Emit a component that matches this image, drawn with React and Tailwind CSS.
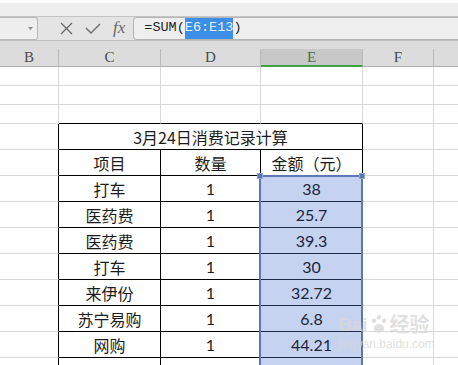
import React from 'react';

const cjk = { fontFamily: "'Noto Sans CJK SC', 'Noto Sans', sans-serif" };
const num = { fontFamily: "Lato, 'Noto Sans', sans-serif" };
const mono = { fontFamily: "'Liberation Mono', 'DejaVu Sans Mono', monospace" };
const serif = { fontFamily: "'Liberation Serif', 'DejaVu Serif', serif" };

const rows = [
  ['打车', '1', '38'],
  ['医药费', '1', '25.7'],
  ['医药费', '1', '39.3'],
  ['打车', '1', '30'],
  ['来伊份', '1', '32.72'],
  ['苏宁易购', '1', '6.8'],
  ['网购', '1', '44.21'],
  ['', '', ''],
];

// empty grid row above the table
const EmptyRow = ({ tableTop }) => (
  <div className="flex h-[19px] shrink-0">
    <div className="w-[59px] border-r border-b border-[#d9d9d9]" />
    <div className={`w-[102px] border-r border-b ${tableTop ? 'border-r-[#d9d9d9] border-b-black' : 'border-[#d9d9d9]'}`} />
    <div className={`w-[100px] border-r border-b ${tableTop ? 'border-r-[#d9d9d9] border-b-black' : 'border-[#d9d9d9]'}`} />
    <div className={`w-[102px] border-r border-b ${tableTop ? 'border-r-[#d9d9d9] border-b-black' : 'border-[#d9d9d9]'}`} />
    <div className="w-[71px] border-r border-b border-[#d9d9d9]" />
    <div className="flex-1 border-b border-[#d9d9d9]" />
  </div>
);

const TableRow = ({ a, b, c, selected, header }) => (
  <div className="flex h-[26px] shrink-0 text-[16px] text-[#1c1c1c]">
    <div className="w-[59px] border-r border-r-black border-b border-b-[#d9d9d9]" />
    <div className="w-[102px] border-r border-b border-black flex items-center justify-center" style={cjk}>{a}</div>
    <div className="w-[100px] border-r border-b border-black flex items-center justify-center" style={header ? cjk : num}>{b}</div>
    <div
      className={`w-[102px] border-r border-b flex items-center justify-center ${selected ? 'bg-[#c6d3f0] border-[#1d2a48] text-[#1b2540]' : 'border-black'}`}
      style={header ? cjk : num}
    >
      {c}
    </div>
    <div className="w-[71px] border-r border-b border-[#d9d9d9]" />
    <div className="flex-1 border-b border-[#d9d9d9]" />
  </div>
);

const HeaderCell = ({ label, w, active }) => (
  <div
    className={`${w} h-full flex items-center justify-center text-[15px] ${active ? 'bg-[#c8c8c8] text-[#4d6b4d] border-b-2 border-b-[#3fa146] border-r border-r-[#b9b9b9]' : 'text-[#4a4a4a] border-r border-[#b9b9b9] border-b border-b-[#b0b0b0]'}`}
    style={serif}
  >
    {label}
  </div>
);

export default function App() {
  return (
    <div className="relative w-[458px] h-[365px] overflow-hidden bg-white flex flex-col">
      {/* top strip */}
      <div className="h-[3px] shrink-0 bg-white" />
      <div className="h-[14px] shrink-0 bg-[#eeeeee] border-b border-[#c4c4c4]" />

      {/* formula bar */}
      <div className="h-[24px] shrink-0 bg-[#e4e4e4] border-b border-[#c2c2c2] flex items-center">
        <div className="w-[38px] h-[23px] bg-[#eeeeee] border border-l-0 border-[#b8b8b8] rounded-r-[3px] flex items-center justify-end pr-[4px]">
          <svg width="5" height="3" viewBox="0 0 5 3"><path d="M0 0h5L2.5 3z" fill="#8a8a8a" /></svg>
        </div>
        <div className="flex items-center ml-[22px] gap-[12px] text-[#6a6a6a]">
          <svg width="13" height="13" viewBox="0 0 13 13" fill="none" stroke="#6b6b6b" strokeWidth="1.3">
            <path d="M1 1l11 11M12 1L1 12" />
          </svg>
          <svg width="16" height="11" viewBox="0 0 16 11" fill="none" stroke="#6b6b6b" strokeWidth="1.4">
            <path d="M1 5l5 5L15 1" />
          </svg>
          <span className="italic text-[17px] leading-none -mt-[2px]" style={serif}>fx</span>
        </div>
        <div className="ml-[8px] flex-1 h-[23px] bg-[#efefef] border border-r-0 border-[#b4b4b4] rounded-l-[4px] flex items-center pl-[10px] text-[13.5px] text-[#1e1e1e]" style={mono}>
          <span>=SUM(</span>
          <span className="bg-[#3d8ee6] text-[#e6efff]">E6:E13</span>
          <span>)</span>
        </div>
      </div>

      {/* column headers */}
      <div className="h-[8px] shrink-0 bg-[#dcdcdc]" />
      <div className="h-[18px] shrink-0 flex bg-[#dcdcdc]">
        <HeaderCell label="B" w="w-[59px]" />
        <HeaderCell label="C" w="w-[102px]" />
        <HeaderCell label="D" w="w-[100px]" />
        <HeaderCell label="E" w="w-[102px]" active />
        <HeaderCell label="F" w="w-[71px]" />
        <div className="flex-1 border-b border-[#b0b0b0]" />
      </div>

      {/* sheet */}
      <div className="flex flex-col">
        <EmptyRow />
        <EmptyRow />
        <EmptyRow tableTop />
        <div className="flex h-[26px] shrink-0 text-[16px] text-[#1c1c1c]">
          <div className="w-[59px] border-r border-r-black border-b border-b-[#d9d9d9]" />
          <div className="w-[304px] border-r border-b border-black flex items-center justify-center" style={cjk}>
            3月24日消费记录计算
          </div>
          <div className="w-[71px] border-r border-b border-[#d9d9d9]" />
          <div className="flex-1 border-b border-[#d9d9d9]" />
        </div>
        <TableRow a="项目" b="数量" c="金额（元）" header />
        {rows.map((r, i) => (
          <TableRow key={i} a={r[0]} b={r[1]} c={r[2]} selected />
        ))}
      </div>

      {/* selection frame */}
      <div className="absolute left-[259px] top-[175px] w-[104px] h-[210px] border-2 border-[#5b77b5] pointer-events-none" />
      <div className="absolute left-[257px] top-[173px] w-[6px] h-[6px] bg-[#5b77b5] border border-[#8ea2d0]" />
      <div className="absolute left-[359px] top-[173px] w-[6px] h-[6px] bg-[#5b77b5] border border-[#8ea2d0]" />

      {/* watermark */}
      <div className="absolute left-[338px] top-[314px] text-[#d8d8d8]/80 leading-none pointer-events-none" style={{ fontFamily: "'Liberation Sans', sans-serif" }}>
        <div className="flex items-end gap-[2px]">
          <span className="text-[19px] font-bold">Bai</span>
          <svg width="18" height="20" viewBox="0 0 16 18" fill="rgba(216,216,216,0.8)">
            <circle cx="3.5" cy="6" r="2" /><circle cx="8" cy="3" r="2" /><circle cx="12.5" cy="6" r="2" />
            <ellipse cx="8" cy="13" rx="4.5" ry="4" />
          </svg>
          <span className="text-[20px] font-bold" style={cjk}>经验</span>
        </div>
        <div className="text-[12px] mt-[4px]">jingyan.baidu.com</div>
      </div>
    </div>
  );
}
